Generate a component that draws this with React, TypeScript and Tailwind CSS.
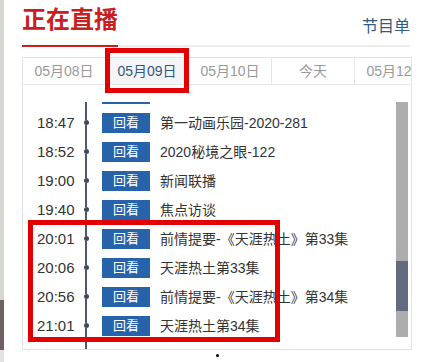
import React from 'react'

const FONT = '"Liberation Sans", "Noto Sans CJK SC", sans-serif'

const tabs = [
  { label: '05月08日', active: false },
  { label: '05月09日', active: true },
  { label: '05月10日', active: false },
  { label: '今天', active: false },
  { label: '05月12日', active: false },
]

const programs = [
  { time: '18:47', title: '第一动画乐园-2020-281' },
  { time: '18:52', title: '2020秘境之眼-122' },
  { time: '19:00', title: '新闻联播' },
  { time: '19:40', title: '焦点访谈' },
  { time: '20:01', title: '前情提要-《天涯热土》第33集' },
  { time: '20:06', title: '天涯热土第33集' },
  { time: '20:56', title: '前情提要-《天涯热土》第34集' },
  { time: '21:01', title: '天涯热土第34集' },
]

function LineCell({ dot = false }: { dot?: boolean }) {
  return (
    <div className="flex w-[12px] shrink-0 flex-col items-center self-stretch">
      <div className="w-[2px] flex-1 bg-[#4b5a6e]" />
      {dot && <div className="h-[5px] w-[5px] rounded-full bg-[#3d4b5e]" />}
      {dot && <div className="w-[2px] flex-1 bg-[#4b5a6e]" />}
    </div>
  )
}

function ProgramRow({ time, title }: { time: string; title: string }) {
  return (
    <div className="flex h-[29px] items-center">
      <span className="w-[57px] shrink-0 pl-[14px] text-[15px] leading-none text-[#333]">{time}</span>
      <LineCell dot />
      <span className="ml-[10px] flex h-[20px] w-[48px] shrink-0 items-center justify-center bg-[#2763aa] text-[13px] leading-none text-white">
        回看
      </span>
      <span className="ml-[10px] whitespace-nowrap text-[14px] leading-none text-[#333]">{title}</span>
    </div>
  )
}

export default function App() {
  return (
    <div
      className="relative flex h-[362px] w-[443px] overflow-hidden bg-white"
      style={{ fontFamily: FONT }}
    >
      {/* left edge of neighbouring panel */}
      <div className="flex w-[4px] shrink-0 flex-col">
        <div className="h-[300px] bg-[#d3d8d1]" />
        <div className="h-[50px] bg-[#6d625f]" />
        <div className="flex-1 bg-[#e4e4e4]" />
      </div>

      <div className="ml-[18px] flex w-[390px] flex-col">
        {/* header */}
        <div className="flex h-[45px] w-[388px] items-start justify-between">
          <h1 className="mt-[8px] text-[24px] font-bold leading-[24px] text-[#c9201f]">正在直播</h1>
          <span className="mt-[18px] text-[16px] leading-[17px] text-[#2f5b85]">节目单</span>
        </div>
        <div className="flex h-[2px] w-[388px]">
          <div className="w-[96px] bg-[#c9201f]" />
          <div className="flex-1 bg-[#ececec]" />
        </div>

        {/* schedule box */}
        <div className="mt-[10px] flex h-[293px] w-[390px] flex-col border border-[#e3e3e3]">
          <div className="flex h-[27px] shrink-0 overflow-hidden border-b border-[#e6e6e6]">
            {tabs.map((t) => (
              <div
                key={t.label}
                className={
                  t.active
                    ? 'flex h-[26px] w-[83px] shrink-0 items-center justify-center border-r border-[#e6e6e6] bg-[#f3f5f8] text-[14px] text-[#34587a]'
                    : 'flex h-[26px] w-[83px] shrink-0 items-center justify-center border-r border-[#e6e6e6] text-[14px] text-[#999]'
                }
              >
                {t.label}
              </div>
            ))}
          </div>

          <div className="flex flex-1 overflow-hidden">
            <div className="flex flex-1 flex-col pt-[17px]">
              <div className="flex h-[6px]">
                <div className="w-[57px] shrink-0" />
                <LineCell />
                <div className="ml-[10px] h-[2px] w-[48px] bg-[#2763aa]" />
              </div>
              {programs.map((p) => (
                <ProgramRow key={p.time} time={p.time} title={p.title} />
              ))}
              <div className="flex flex-1">
                <div className="w-[57px] shrink-0" />
                <LineCell />
              </div>
            </div>
            {/* scrollbar */}
            <div className="mr-[3px] mt-[17px] flex h-[235px] w-[12px] shrink-0 flex-col bg-[#adadad]">
              <div className="mt-[159px] h-[50px] bg-[#636b80]" />
            </div>
          </div>
        </div>

        <div className="mx-auto mt-[4px] h-[3px] w-[3px] rounded-full bg-black" />
      </div>

      {/* annotation boxes */}
      <div className="absolute left-[105px] top-[48px] h-[45px] w-[84px] border-[5px] border-[#e30000]" />
      <div className="absolute left-[28px] top-[220px] h-[122px] w-[252px] border-[5px] border-[#e30000]" />
    </div>
  )
}
